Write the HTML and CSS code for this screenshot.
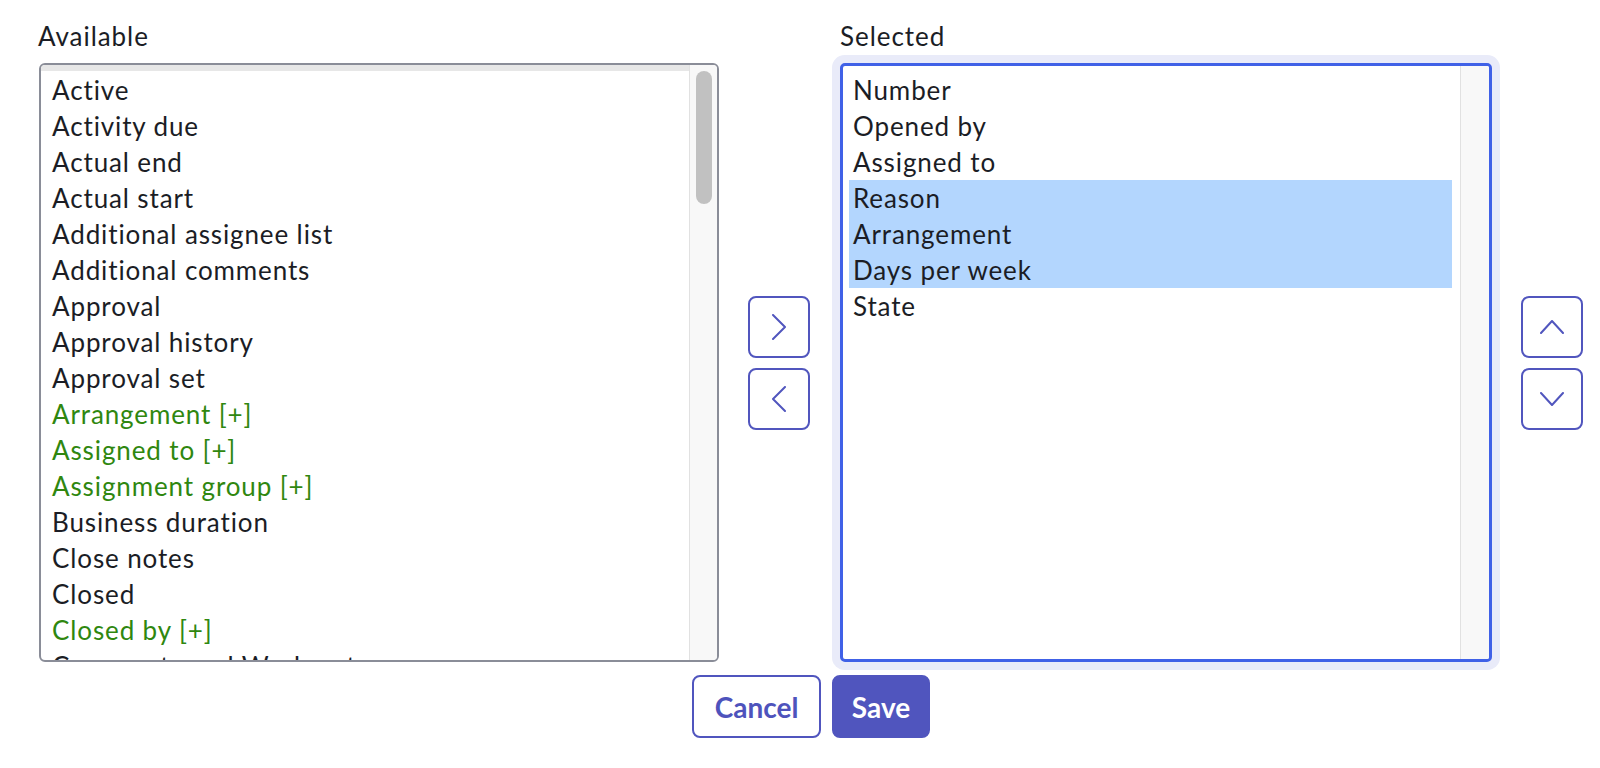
FILE: index.html
```html
<!DOCTYPE html>
<html lang="en">
<head>
<meta charset="utf-8">
<title>Slushbucket</title>
<link rel="stylesheet" href="styles.css">
</head>
<body>
<div class="page">
  <div class="picker">
    <div class="label label-left">Available</div>
    <div class="label label-right">Selected</div>

    <div class="listbox listbox-left">
      <div class="list">
        <div class="band"></div>
        <div class="opt">Active</div>
        <div class="opt">Activity due</div>
        <div class="opt">Actual end</div>
        <div class="opt">Actual start</div>
        <div class="opt">Additional assignee list</div>
        <div class="opt">Additional comments</div>
        <div class="opt">Approval</div>
        <div class="opt">Approval history</div>
        <div class="opt">Approval set</div>
        <div class="opt ref">Arrangement [+]</div>
        <div class="opt ref">Assigned to [+]</div>
        <div class="opt ref">Assignment group [+]</div>
        <div class="opt">Business duration</div>
        <div class="opt">Close notes</div>
        <div class="opt">Closed</div>
        <div class="opt ref">Closed by [+]</div>
        <div class="opt">Comments and Work notes</div>
        <div class="opt">Company</div>
      </div>
      <div class="track"><div class="thumb"></div></div>
    </div>

    <div class="mover">
      <button class="icon-btn" aria-label="Add">
        <svg width="14" height="26" viewBox="0 0 14 26"><polyline points="1,1 13,13 1,25" /></svg>
      </button>
      <button class="icon-btn" aria-label="Remove">
        <svg width="14" height="26" viewBox="0 0 14 26"><polyline points="13,1 1,13 13,25" /></svg>
      </button>
    </div>

    <div class="listbox listbox-right">
      <div class="list">
        <div class="opt">Number</div>
        <div class="opt">Opened by</div>
        <div class="opt">Assigned to</div>
        <div class="opt sel">Reason</div>
        <div class="opt sel">Arrangement</div>
        <div class="opt sel">Days per week</div>
        <div class="opt">State</div>
      </div>
      <div class="track"></div>
    </div>

    <div class="mover">
      <button class="icon-btn" aria-label="Move up">
        <svg width="24" height="14" viewBox="0 0 24 14"><polyline points="1,13 12,1 23,13" /></svg>
      </button>
      <button class="icon-btn" aria-label="Move down">
        <svg width="24" height="14" viewBox="0 0 24 14"><polyline points="1,1 12,13 23,1" /></svg>
      </button>
    </div>
  </div>

  <div class="actions">
    <button class="btn btn-cancel">Cancel</button>
    <button class="btn btn-save">Save</button>
  </div>
</div>
</body>
</html>
```

FILE: styles.css
```css
html, body {
  margin: 0;
  padding: 0;
  background: #ffffff;
}

body {
  font-family: Lato, "Open Sans", "Liberation Sans", sans-serif;
  color: #1b1d25;
}

.page {
  width: 1544px;
  margin-left: 39px;
  padding-top: 18px;
}

.picker {
  display: grid;
  grid-template-columns: 680px 62px 653px 62px;
  grid-template-rows: 36px 599px;
  column-gap: 29px;
  row-gap: 9px;
}

.label {
  font-size: 26px;
  line-height: 36px;
  letter-spacing: 0.95px;
  grid-row: 1;
}

.label-left {
  grid-column: 1;
  margin-left: -1px;
}

.label-right {
  grid-column: 3;
  margin-left: 1px;
}

.listbox {
  grid-row: 2;
  display: flex;
  box-sizing: border-box;
  height: 599px;
  overflow: hidden;
  background: #ffffff;
}

.listbox-left {
  grid-column: 1;
  border: 2px solid #8a8d98;
  border-radius: 6px;
}

.listbox-right {
  grid-column: 3;
  margin-left: 1px;
  border: 3px solid #4061e7;
  border-radius: 5px;
  box-shadow: 0 0 0 8px #e9ebf9;
}

.list {
  flex: 1;
  overflow: hidden;
  font-size: 26px;
  line-height: 36px;
  letter-spacing: 0.88px;
}

.listbox-left .list {
  padding: 0 0 0 7px;
}

.listbox-right .list {
  padding: 6px 8px 0 6px;
}

.band {
  height: 6px;
  margin: 0 0 1px -7px;
  background: #e7e7e7;
}

.opt {
  padding-left: 4px;
  white-space: nowrap;
  height: 36px;
}

.ref {
  color: #2f870f;
}

.sel {
  background: #b3d6fe;
}

.track {
  position: relative;
  background: #f8f8f8;
  border-left: 1px solid #e1e1e1;
}

.listbox-left .track {
  width: 27px;
}

.listbox-right .track {
  width: 28px;
}

.thumb {
  position: absolute;
  top: 6px;
  left: 6px;
  width: 16px;
  height: 133px;
  border-radius: 8px;
  background: #c1c1c1;
}

.mover {
  grid-row: 2;
  align-self: center;
  display: flex;
  flex-direction: column;
  gap: 10px;
  margin-top: 1px;
}

.icon-btn {
  width: 62px;
  height: 62px;
  box-sizing: border-box;
  padding: 0;
  border: 2px solid #5156be;
  border-radius: 8px;
  background: #ffffff;
  display: flex;
  align-items: center;
  justify-content: center;
}

.icon-btn svg polyline {
  fill: none;
  stroke: #5156be;
  stroke-width: 2;
  stroke-linecap: round;
  stroke-linejoin: round;
}

.actions {
  display: flex;
  justify-content: center;
  gap: 11px;
  margin-top: 13px;
}

.btn {
  height: 63px;
  box-sizing: border-box;
  border: 2px solid #5055be;
  border-radius: 8px;
  font-family: Lato, "Open Sans", "Liberation Sans", sans-serif;
  font-weight: 700;
  font-size: 28px;
  line-height: 1;
}

.btn-cancel {
  width: 129px;
  background: #ffffff;
  color: #4e53bc;
}

.btn-save {
  width: 98px;
  background: #5055be;
  color: #ffffff;
}
```
